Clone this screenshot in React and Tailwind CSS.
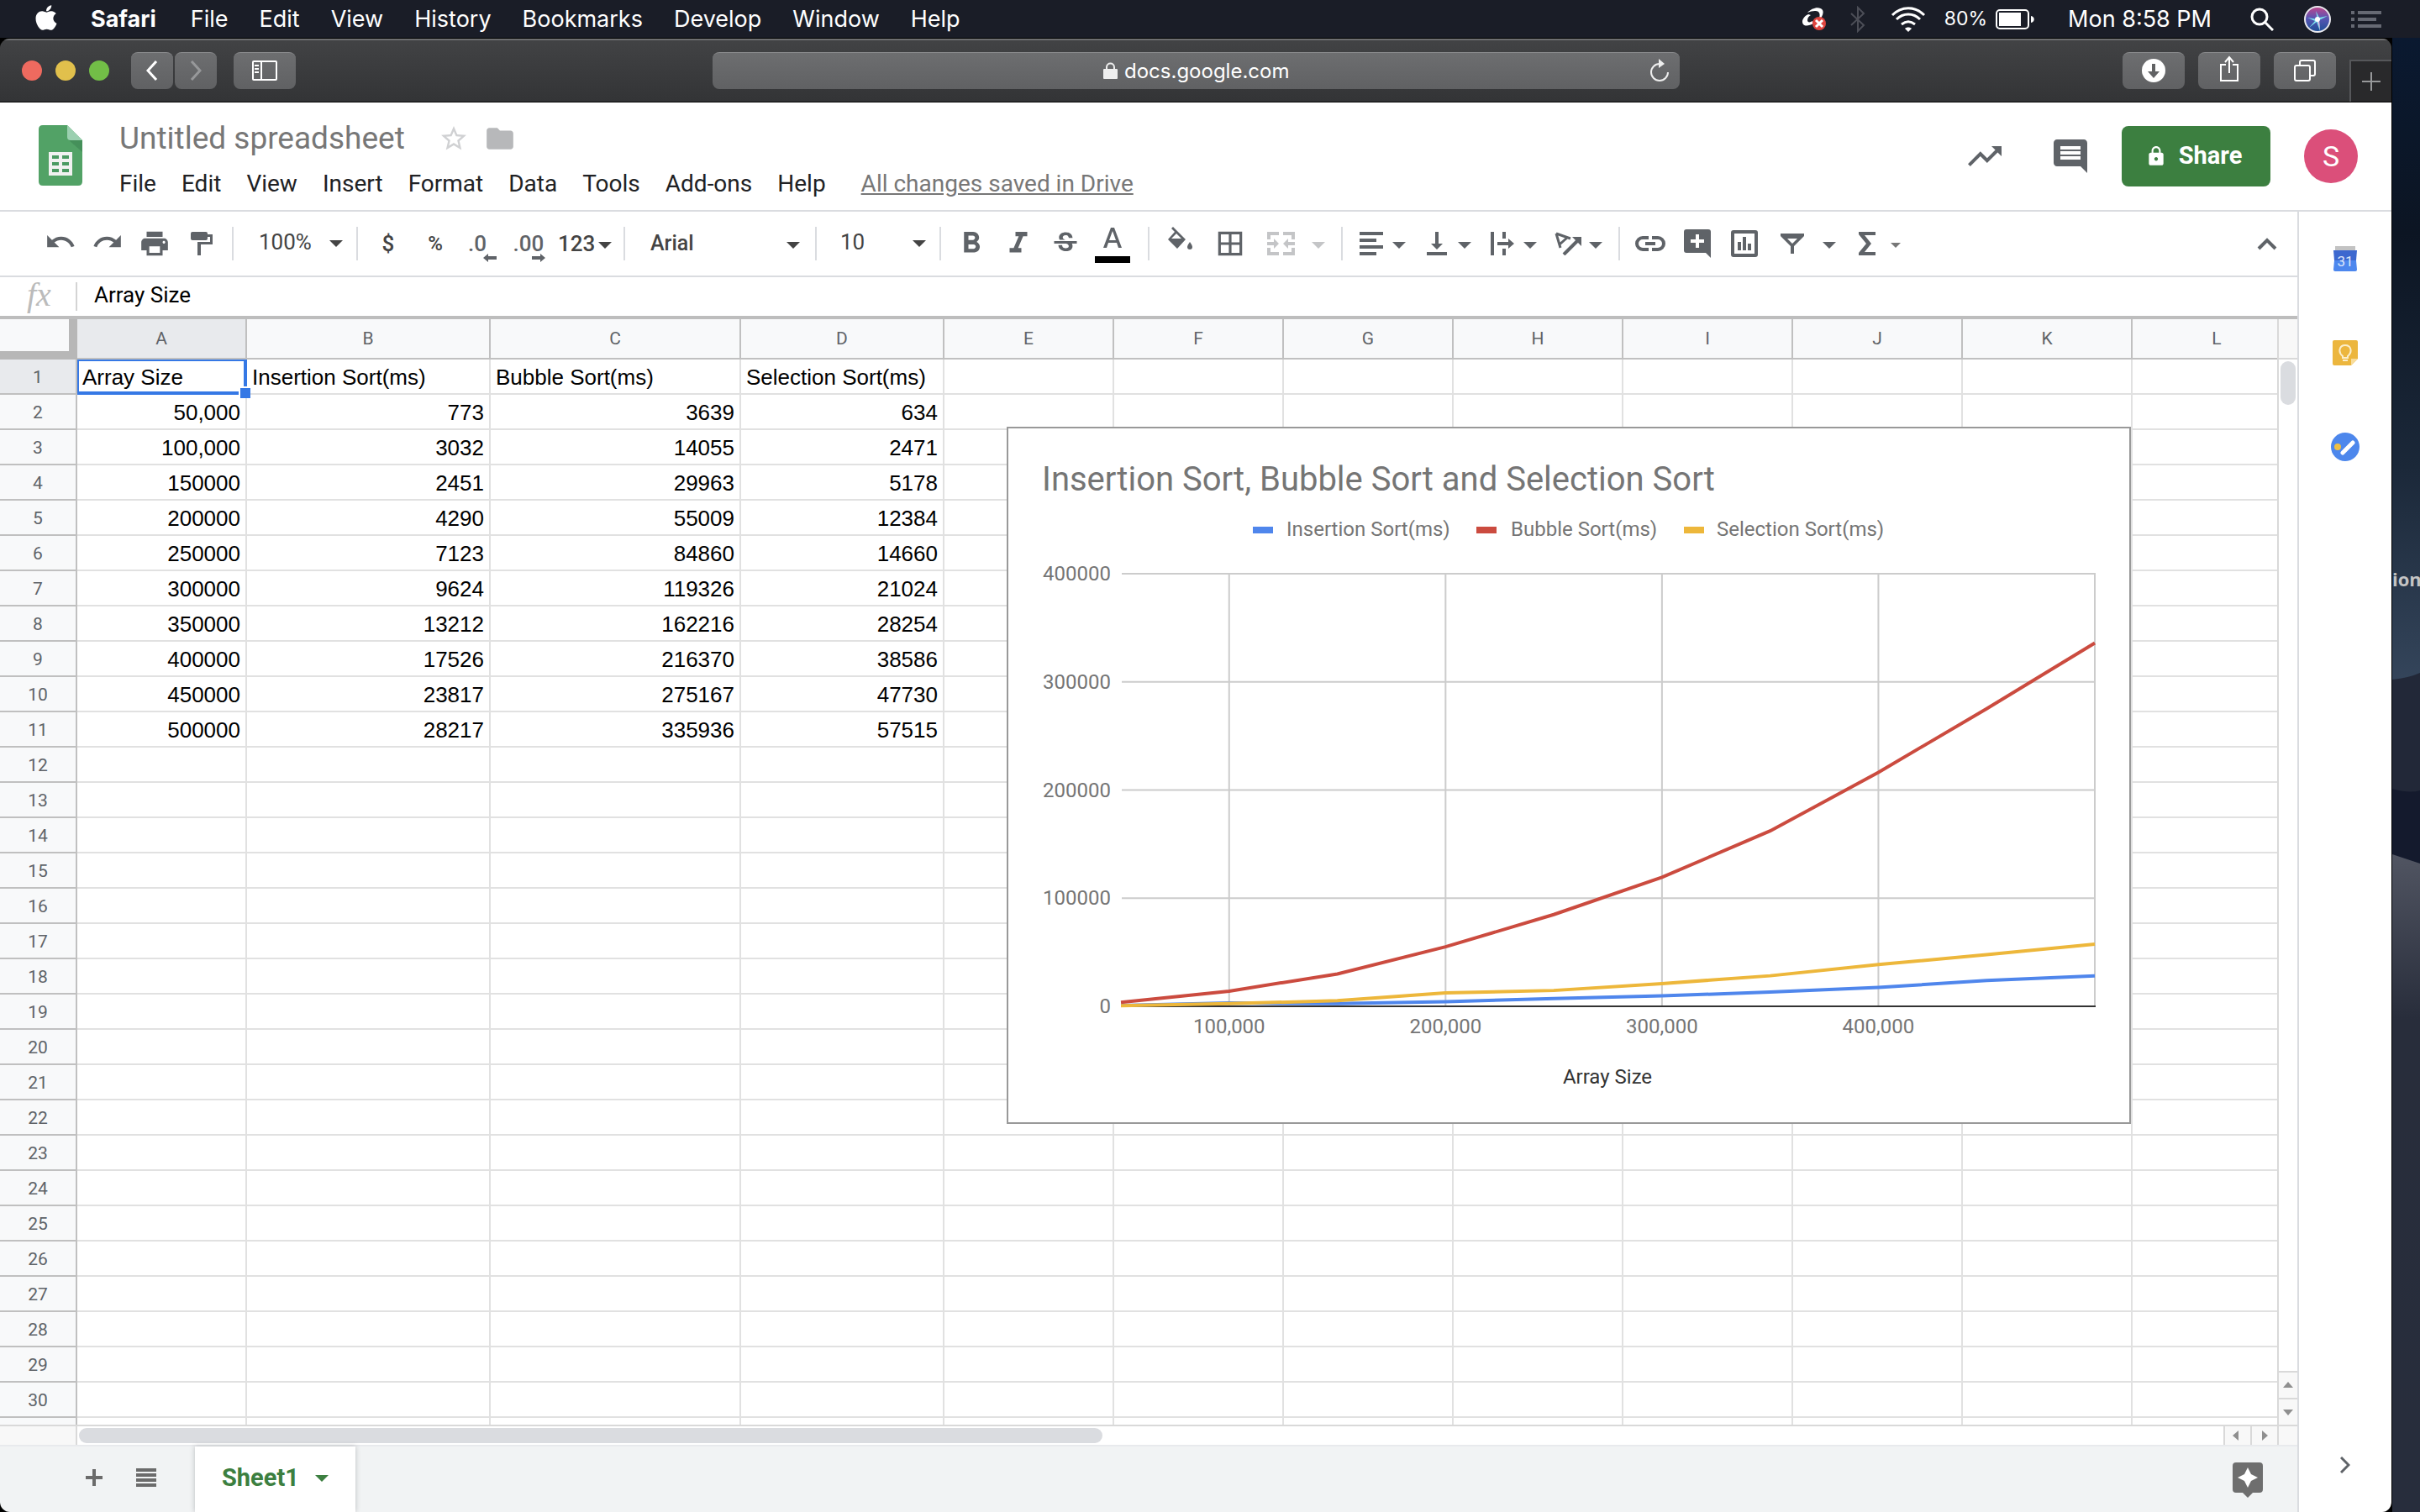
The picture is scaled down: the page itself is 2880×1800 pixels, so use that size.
import React from "react";
import { FaApple } from "react-icons/fa";
import {
  MdUndo, MdRedo, MdPrint, MdFormatBold, MdFormatItalic, MdStrikethroughS,
  MdBorderAll, MdTrendingUp, MdComment, MdLock, MdStarBorder, MdFolder,
} from "react-icons/md";

const macMenus = ["File", "Edit", "View", "History", "Bookmarks", "Develop", "Window", "Help"];
const docMenus = ["File", "Edit", "View", "Insert", "Format", "Data", "Tools", "Add-ons", "Help"];

const columns = [
  ["A", "w-[202px]"], ["B", "w-[290px]"], ["C", "w-[298px]"], ["D", "w-[242px]"],
  ["E", "w-[202px]"], ["F", "w-[202px]"], ["G", "w-[202px]"], ["H", "w-[202px]"],
  ["I", "w-[202px]"], ["J", "w-[202px]"], ["K", "w-[202px]"], ["L", "w-[202px]"],
];

const data = [
  ["Array Size", "Insertion Sort(ms)", "Bubble Sort(ms)", "Selection Sort(ms)"],
  ["50,000", "773", "3639", "634"],
  ["100,000", "3032", "14055", "2471"],
  ["150000", "2451", "29963", "5178"],
  ["200000", "4290", "55009", "12384"],
  ["250000", "7123", "84860", "14660"],
  ["300000", "9624", "119326", "21024"],
  ["350000", "13212", "162216", "28254"],
  ["400000", "17526", "216370", "38586"],
  ["450000", "23817", "275167", "47730"],
  ["500000", "28217", "335936", "57515"],
];

function MenuBar() {
  return (
    <header className="flex h-[45px] shrink-0 items-center bg-[#1a1d27] pl-10 pr-[46px] text-[27px] leading-none text-white">
      <FaApple className="mb-1 h-[34px] w-[30px]" aria-hidden="true" />
      <nav className="ml-[38px] flex items-center gap-[37px]" aria-label="System menu">
        <button className="mr-1 font-bold">Safari</button>
        {macMenus.map((m) => <button key={m}>{m}</button>)}
      </nav>
      <div className="ml-auto flex items-center">
        <svg viewBox="0 0 30 30" className="h-[30px] w-[30px]" aria-hidden="true">
          <path d="M7 7C12 1 22-1 25 4c2 4-1 9-5 13 1-4 3-8 0-11-3-2-8-1-13 1z" fill="#fff" />
          <path d="M8 9C3 11-1 17 2 21c3 3 8 1 12-1l-1-3c-3 2-6 2-6-1s2-5 4-6z" fill="#fff" />
          <circle cx="21" cy="20" r="8" fill="#e0453f" />
          <path d="M17 16l8 8M25 16l-8 8" stroke="#fff" strokeWidth="3" />
        </svg>
        <svg viewBox="0 0 18 32" className="ml-7 h-8 w-[18px]" fill="none" stroke="#4c4e57" strokeWidth="2" aria-hidden="true">
          <path d="M1 9l15 14-7 7V2l7 7L1 23" />
        </svg>
        <svg viewBox="0 0 42 30" className="ml-[30px] h-[30px] w-[42px]" fill="none" stroke="#fff" strokeWidth="3" aria-hidden="true">
          <path d="M2 10C13-1 29-1 40 10M7 15c8-8 20-8 28 0M13 21c5-4 11-4 16 0" />
          <path d="M17 26c2-2 6-2 8 0l-4 4z" fill="#fff" stroke="none" />
        </svg>
        <span className="ml-[22px] text-[23px]">80%</span>
        <svg viewBox="0 0 46 24" className="ml-[10px] h-6 w-[46px]" aria-hidden="true">
          <rect x="1" y="1" width="38" height="22" rx="4" fill="none" stroke="#fff" strokeWidth="2" />
          <rect x="4" y="4" width="26" height="16" fill="#fff" />
          <path d="M42 8c5 1 5 7 0 8z" fill="#fff" />
        </svg>
        <span className="ml-10">Mon 8:58 PM</span>
        <svg viewBox="0 0 28 28" className="ml-[46px] h-7 w-7" fill="none" stroke="#fff" strokeWidth="3" aria-hidden="true">
          <circle cx="11" cy="11" r="9" /><path d="M17 17l10 10" />
        </svg>
        <svg viewBox="0 0 32 32" className="ml-9 h-8 w-8" aria-hidden="true">
          <defs>
            <linearGradient id="siri" x1="0" y1="0" x2="0" y2="1">
              <stop offset="0" stopColor="#c2458a" /><stop offset=".45" stopColor="#5a55b4" /><stop offset="1" stopColor="#1c4f96" />
            </linearGradient>
          </defs>
          <circle cx="16" cy="16" r="15" fill="url(#siri)" stroke="#e8e8ee" strokeWidth="2" />
          <path d="M16 16L4 14l9 4-7 8 9-7 4 11-1-13 10-5-10 2-4-8z" fill="#7fe3ee" />
          <path d="M16 16l3 13-1-12z" fill="#f3a5d8" />
          <circle cx="16" cy="16" r="3" fill="#fff" />
        </svg>
        <svg viewBox="0 0 36 20" className="ml-6 h-5 w-9" fill="#666973" aria-hidden="true">
          <path d="M0 0h4v4H0zM8 0h28v4H8zM0 8h4v4H0zM8 8h22v4H8zM0 16h4v4H0zM8 16h28v4H8z" />
        </svg>
      </div>
    </header>
  );
}

const macBtn = "flex h-11 items-center justify-center rounded-lg border-t border-[#88898b] bg-linear-to-b from-[#6d6e70] to-[#606163]";

function SafariBar() {
  return (
    <div className="flex h-[76px] shrink-0 items-center border-b border-black bg-linear-to-b from-[#424345] to-[#333436] pl-[26px] shadow-[inset_0_2px_0_#6d6e70]">
      <div className="flex gap-4">
        <button aria-label="Close" className="h-6 w-6 rounded-full bg-[#ee6a5f]" />
        <button aria-label="Minimize" className="h-6 w-6 rounded-full bg-[#e1c04c]" />
        <button aria-label="Zoom" className="h-6 w-6 rounded-full bg-[#72be47]" />
      </div>
      <button aria-label="Back" className={`${macBtn} ml-[26px] w-[50px]`}>
        <svg viewBox="0 0 14 24" className="h-6 w-3.5" fill="none" stroke="#fff" strokeWidth="3"><path d="M12 1L2 12l10 11" /></svg>
      </button>
      <button aria-label="Forward" className={`${macBtn} ml-0.5 w-[50px]`}>
        <svg viewBox="0 0 14 24" className="h-6 w-3.5" fill="none" stroke="#97989a" strokeWidth="3"><path d="M2 1l10 11L2 23" /></svg>
      </button>
      <button aria-label="Sidebar" className={`${macBtn} ml-5 w-[74px]`}>
        <svg viewBox="0 0 30 24" className="h-6 w-[30px]" fill="none" stroke="#fff" strokeWidth="2">
          <rect x="1" y="1" width="28" height="22" rx="1" /><path d="M11 1v22M3 6h5M3 10h5M3 14h5" />
        </svg>
      </button>
      <div className={`${macBtn} ml-[496px] mr-[527px] min-w-0 flex-1 pl-3`}>
        <div className="flex flex-1 items-center justify-center gap-2 pl-7">
          <svg viewBox="0 0 17 20" className="h-5 w-[17px] shrink-0" aria-hidden="true">
            <rect y="8" width="17" height="12" rx="1" fill="#eee" />
            <path d="M4 9V6c0-6 9-6 9 0v3" fill="none" stroke="#eee" strokeWidth="2" />
          </svg>
          <input aria-label="Address" defaultValue="docs.google.com" className="mt-0.5 w-[200px] bg-transparent text-[24px] leading-8 text-white" />
        </div>
        <button aria-label="Reload" className="pr-3">
          <svg viewBox="0 0 24 28" className="h-7 w-6" fill="none" stroke="#eee" strokeWidth="2">
            <path d="M12 6a10 10 0 1 0 10 10" /><path d="M11 0v11l7-5z" fill="#eee" stroke="none" />
          </svg>
        </button>
      </div>
      <div className="flex gap-4">
        <button aria-label="Downloads" className={`${macBtn} w-[74px]`}>
          <svg viewBox="0 0 28 28" className="h-7 w-7"><circle cx="14" cy="14" r="14" fill="#fff" /><path d="M12 6h4v9h5l-7 8-7-8h5z" fill="#616264" /></svg>
        </button>
        <button aria-label="Share page" className={`${macBtn} w-[74px]`}>
          <svg viewBox="0 0 24 32" className="mb-1 h-8 w-6" fill="none" stroke="#fff" strokeWidth="2"><path d="M8 11H2v19h20V11h-6M12 21V2M7 8l5-6 5 6" /></svg>
        </button>
        <button aria-label="Tabs" className={`${macBtn} w-[74px]`}>
          <svg viewBox="0 0 26 26" className="h-[26px] w-[26px]" fill="none" stroke="#fff" strokeWidth="2"><rect x="1" y="7" width="18" height="18" rx="2" /><path d="M7 7V3q0-2 2-2h14q2 0 2 2v14q0 2-2 2h-3" /></svg>
        </button>
      </div>
      <button aria-label="New tab" className="ml-4 flex h-[50px] w-[50px] shrink-0 items-center justify-center self-end border-l-2 border-t-2 border-[#56575a] bg-[#29292b]">
        <svg viewBox="0 0 22 22" className="h-[22px] w-[22px]" stroke="#97989a" strokeWidth="2"><path d="M11 0v22M0 11h22" /></svg>
      </button>
    </div>
  );
}

function DocHeader() {
  return (
    <div className="flex h-[130px] shrink-0 items-center border-b-2 border-[#dadce0] bg-white pl-[46px] pr-10">
      <svg viewBox="0 0 52 72" className="mb-0.5 h-[72px] w-[52px] shrink-0" aria-hidden="true">
        <path d="M5 0h29l18 18v49q0 5-5 5H5q-5 0-5-5V5q0-5 5-5z" fill="#52a266" />
        <path d="M36 18h16v14z" fill="#45905a" />
        <path d="M34 0l18 18H38q-4 0-4-4z" fill="#9bd0b0" />
        <path d="M12 32h28v28H12z" fill="#f1f1f1" />
        <path d="M16 36h8v4h-8zM28 36h8v4h-8zM16 44h8v4h-8zM28 44h8v4h-8zM16 52h8v4h-8zM28 52h8v4h-8z" fill="#4a9a62" />
      </svg>
      <div className="ml-11 flex flex-col pt-1.5">
        <div className="flex items-center">
          <h1 className="text-[37px] leading-[44px] text-[#777]">Untitled spreadsheet</h1>
          <button aria-label="Star" className="ml-10"><MdStarBorder className="h-9 w-9 text-[#d0d1d3]" /></button>
          <button aria-label="Move to folder" className="ml-[18px]"><MdFolder className="h-[38px] w-[38px] text-[#b7b8ba]" /></button>
        </div>
        <nav className="mt-4 flex items-center gap-[30px] text-[28px] leading-8 text-[#202124]" aria-label="Document menu">
          {docMenus.map((m) => <button key={m}>{m}</button>)}
          <a href="#history" className="ml-3 text-[#777] underline">All changes saved in Drive</a>
        </nav>
      </div>
      <div className="ml-auto flex items-center">
        <button aria-label="Activity"><MdTrendingUp className="h-12 w-12 text-[#5f6368]" /></button>
        <button aria-label="Comments" className="ml-[54px]"><MdComment className="h-12 w-12 text-[#5f6368]" /></button>
        <button className="ml-[37px] flex h-[72px] w-[177px] items-center justify-center gap-3.5 rounded-lg bg-[#3c7f40] pr-1.5 text-[29px] font-bold text-white">
          <MdLock className="h-[26px] w-[26px]" aria-hidden="true" />Share
        </button>
        <button aria-label="Account" className="ml-10 h-16 w-16 rounded-full bg-[#db4f7a] text-[34px] leading-[64px] text-white">S</button>
      </div>
    </div>
  );
}

function Caret({ small, className = "" }) {
  return (
    <svg viewBox="0 0 16 8" className={`${small ? "h-1.5 w-3" : "h-2 w-4"} shrink-0 ${className}`} fill="currentColor" aria-hidden="true">
      <path d="M0 0h16L8 8z" />
    </svg>
  );
}
const Sep = ({ className = "mx-2" }) => <div className={`${className} h-10 w-0.5 shrink-0 bg-[#dadce0]`} />;
function Tool({ label, children, className = "w-14" }) {
  return <button aria-label={label} className={`${className} flex h-14 shrink-0 items-center justify-center`}>{children}</button>;
}
function DropTool({ label, children, small, className = "w-[78px]" }) {
  return (
    <button aria-label={label} className={`${className} flex h-14 shrink-0 items-center gap-[7px] pl-2`}>
      <span className="flex w-9 justify-center">{children}</span>
      <Caret small={small} className="mt-1" />
    </button>
  );
}

function Toolbar() {
  return (
    <div role="toolbar" aria-label="Formatting" className="flex h-[78px] shrink-0 items-center border-b-2 border-[#dadce0] bg-white pl-11 text-[26px] font-medium text-[#5f6368]">
      <Tool label="Undo"><MdUndo className="mb-1 h-[38px] w-[38px]" /></Tool>
      <Tool label="Redo"><MdRedo className="mb-1 h-[38px] w-[38px]" /></Tool>
      <Tool label="Print"><MdPrint className="h-[38px] w-[38px]" /></Tool>
      <Tool label="Paint format">
        <svg viewBox="0 0 26 28" className="h-7 w-[26px]" fill="currentColor">
          <path d="M2 0h16q2 0 2 2v1h6v12H12v13H8V12h15V6h-3v2q0 2-2 2H2q-2 0-2-2V2q0-2 2-2z" />
        </svg>
      </Tool>
      <Sep />
      <button aria-label="Zoom level" className="flex w-[130px] items-center justify-between pb-1 pl-[22px] pr-2 font-normal text-[#444]">100%<Caret className="mt-1" /></button>
      <Sep />
      <Tool label="Currency"><span className="text-[#444]">$</span></Tool>
      <Tool label="Percent"><span className="text-[24px] text-[#444]">%</span></Tool>
      <Tool label="Decrease decimals">
        <span className="flex flex-col items-end">
          <span className="mr-3 mt-2.5 leading-6">.0</span>
          <svg viewBox="0 0 16 10" className="h-2.5 w-4" fill="currentColor"><path d="M0 5l6-5v3h10v4H6v3z" /></svg>
        </span>
      </Tool>
      <Tool label="Increase decimals">
        <span className="flex flex-col items-end">
          <span className="mr-0.5 mt-2.5 leading-6">.00</span>
          <svg viewBox="0 0 16 10" className="h-2.5 w-4" fill="currentColor"><path d="M16 5l-6-5v3H0v4h10v3z" /></svg>
        </span>
      </Tool>
      <button aria-label="More formats" className="flex w-[78px] items-center gap-1 pl-1.5 text-[#444]">123<Caret className="mt-1" /></button>
      <Sep className="ml-1.5 mr-2" />
      <button aria-label="Font" className="flex w-[210px] items-center justify-between pl-[22px] pr-2.5 text-[25px] text-[#444]">Arial<Caret className="mt-1" /></button>
      <Sep />
      <button aria-label="Font size" className="flex w-[130px] items-center justify-between pb-1 pl-5 pr-2 font-normal text-[#444]">10<Caret className="mt-1" /></button>
      <Sep />
      <Tool label="Bold"><MdFormatBold className="h-[42px] w-[42px]" /></Tool>
      <Tool label="Italic"><MdFormatItalic className="h-[42px] w-[42px]" /></Tool>
      <Tool label="Strikethrough"><MdStrikethroughS className="h-9 w-9" /></Tool>
      <Tool label="Text color">
        <span className="flex flex-col items-center pt-1">
          <svg viewBox="0 0 22 24" className="h-6 w-[22px]" fill="currentColor"><path d="M9 0h4l9 24h-4l-2-6H6l-2 6H0zM7 15h8L11 4z" /></svg>
          <span className="mt-2.5 h-2 w-[42px] bg-black" />
        </span>
      </Tool>
      <Sep className="ml-3.5 mr-1.5" />
      <Tool label="Fill color" className="w-[60px]">
        <svg viewBox="0 0 30 28" className="mb-3 h-7 w-[30px]" fill="currentColor">
          <path fillRule="evenodd" d="M5 2l2-2 15 15-10 11L1 15 9 6zM11 8l-6 6h12z" />
          <path d="M27 18q3 4 3 6a3 3 0 0 1-6 0q0-2 3-6z" />
        </svg>
      </Tool>
      <Tool label="Borders" className="w-[60px]"><MdBorderAll className="h-[38px] w-[38px]" /></Tool>
      <button aria-label="Merge cells" className="flex h-14 w-[94px] shrink-0 items-center gap-5 pl-3.5 text-[#c4c5c7]">
        <svg viewBox="0 0 33 28" className="h-7 w-[33px]" fill="currentColor">
          <path d="M0 0h14v4H4v5H0zM19 0h14v9h-4V4H19zM0 19h4v5h10v4H0zM29 19h4v9H19v-4h10zM0 12h8V8l6 6-6 6v-4H0zM33 12h-8V8l-6 6 6 6v-4h8z" />
        </svg>
        <Caret className="mt-1" />
      </button>
      <Sep />
      <DropTool label="Horizontal align">
        <svg viewBox="0 0 28 28" className="h-7 w-7" fill="currentColor"><path d="M0 0h28v4H0zM0 8h20v4H0zM0 16h28v4H0zM0 24h20v4H0z" /></svg>
      </DropTool>
      <DropTool label="Vertical align">
        <svg viewBox="0 0 24 28" className="h-7 w-6" fill="currentColor"><path d="M0 24h24v4H0zM10 0h4v14h5l-7 7-7-7h5z" /></svg>
      </DropTool>
      <DropTool label="Text wrapping">
        <svg viewBox="0 0 28 28" className="h-7 w-7" fill="currentColor"><path d="M0 0h4v28H0zM14 0h4v8h-4zM14 20h4v8h-4zM8 12h13V8l7 6-7 6v-4H8z" /></svg>
      </DropTool>
      <DropTool label="Text rotation">
        <svg viewBox="0 0 32 28" className="h-7 w-8" fill="none" stroke="currentColor" strokeWidth="3">
          <path d="M2 2l17 6M2 2l5 17M6 15l9-8" /><path d="M11 27l16-16" strokeWidth="4" /><path d="M21 6h11v11z" fill="currentColor" stroke="none" />
        </svg>
      </DropTool>
      <Sep />
      <Tool label="Insert link">
        <svg viewBox="0 0 36 18" className="h-[18px] w-9" fill="none" stroke="currentColor" strokeWidth="4"><path d="M16 2H9a7 7 0 0 0 0 14h7M20 2h7a7 7 0 0 1 0 14h-7M12 9h12" /></svg>
      </Tool>
      <Tool label="Insert comment">
        <svg viewBox="0 0 32 34" className="h-[34px] w-8" fill="currentColor"><path fillRule="evenodd" d="M3 0h26q3 0 3 3v31l-6-6H3q-3 0-3-3V3q0-3 3-3zM14 6v6H8v4h6v6h4v-6h6v-4h-6V6z" /></svg>
      </Tool>
      <Tool label="Insert chart">
        <svg viewBox="0 0 32 32" className="h-8 w-8" fill="currentColor"><path fillRule="evenodd" d="M3 0h26q3 0 3 3v26q0 3-3 3H3q-3 0-3-3V3q0-3 3-3zM4 4v24h24V4zM8 14h4v10H8zM14 8h4v16h-4zM20 16h4v8h-4z" /></svg>
      </Tool>
      <button aria-label="Filter" className="flex h-14 w-[92px] shrink-0 items-center gap-[22px] pl-[15px]">
        <svg viewBox="0 0 28 24" className="h-6 w-7" fill="currentColor"><path fillRule="evenodd" d="M0 0h28v3L16 15v9h-4v-9L0 3zM8 6l6 6 6-6z" /></svg>
        <Caret className="mt-1" />
      </button>
      <button aria-label="Functions" className="flex h-14 shrink-0 items-center gap-[18px] pl-4">
        <svg viewBox="0 0 20 28" className="h-7 w-5" fill="currentColor"><path d="M0 0h20v4H7l8 10-8 10h13v4H0v-3l9-11L0 3z" /></svg>
        <Caret small className="mt-1 text-[#777]" />
      </button>
      <button aria-label="Hide the menus" className="ml-auto flex w-[72px] justify-center">
        <svg viewBox="0 0 24 15" className="h-[15px] w-6" fill="none" stroke="currentColor" strokeWidth="4"><path d="M2 13L12 3l10 10" /></svg>
      </button>
    </div>
  );
}

function FormulaBar() {
  return (
    <div className="flex h-[50px] shrink-0 items-center border-b-4 border-[#bdbdbd] bg-white">
      <label htmlFor="formula" className="w-[90px] pb-1 pl-8 font-['Liberation_Serif',serif] text-[40px] italic leading-[40px] text-[#bbb]">fx</label>
      <div className="h-[34px] w-0.5 bg-[#d4d4d4]" />
      <input id="formula" defaultValue="Array Size" className="mb-1 min-w-0 flex-1 bg-transparent pl-5 text-[26px] leading-8 text-black" />
    </div>
  );
}

const series = [
  { name: "Insertion Sort(ms)", color: "#4f86ec", col: 1, lx: 291, tx: 331 },
  { name: "Bubble Sort(ms)", color: "#cb4b3f", col: 2, lx: 557, tx: 598 },
  { name: "Selection Sort(ms)", color: "#edb73b", col: 3, lx: 804, tx: 843 },
];
const num = (s) => Number(s.replace(",", ""));
const px = (v) => 134 + ((v - 50000) / 450000) * 1159;
const py = (v) => 688 - (v / 400000) * 515;

function Chart() {
  return (
    <figure className="absolute left-[1198px] top-32 w-[1338px] border-2 border-[#999] bg-white">
      <svg viewBox="0 0 1334 826" className="block w-full" fontSize="24" fill="#757575" role="img" aria-label="Insertion Sort, Bubble Sort and Selection Sort">
        <text x="40" y="74" fontSize="40">Insertion Sort, Bubble Sort and Selection Sort</text>
        {series.map((s) => (
          <g key={s.name}>
            <rect x={s.lx} y="117" width="24" height="8" fill={s.color} />
            <text x={s.tx} y="128">{s.name}</text>
          </g>
        ))}
        {[100000, 200000, 300000, 400000].map((v) => (
          <g key={v}>
            <path d={`M135 ${py(v)}H1294`} stroke="#ccc" strokeWidth="2" />
            <path d={`M${px(v)} 173V688`} stroke="#ccc" strokeWidth="2" />
            <text x="122" y={py(v) + 8} textAnchor="end">{v}</text>
            <text x={px(v)} y="720" textAnchor="middle">{v.toLocaleString("en-US")}</text>
          </g>
        ))}
        <path d="M1293 173V688" stroke="#ccc" strokeWidth="2" />
        <text x="122" y="696" textAnchor="end">0</text>
        <path d="M135 688H1294" stroke="#333" strokeWidth="2" />
        {series.map((s) => (
          <polyline key={s.name} fill="none" stroke={s.color} strokeWidth="4"
            points={data.slice(1).map((r) => `${px(num(r[0]))},${py(num(r[s.col]))}`).join(" ")} />
        ))}
        <text x="713" y="780" textAnchor="middle" fill="#333">Array Size</text>
      </svg>
    </figure>
  );
}

function Grid() {
  return (
    <div className="relative min-w-0 flex-1 overflow-hidden bg-white">
      <table className="w-[2740px] table-fixed border-separate border-spacing-0">
        <colgroup>
          <col className="w-[92px]" />
          {columns.map(([n, w]) => <col key={n} className={w} />)}
        </colgroup>
        <thead>
          <tr className="h-12 text-[21px] text-[#5f6368]">
            <td className="border-b-10 border-r-10 border-[#b7b7b7] bg-[#f8f9fa]" />
            {columns.map(([n]) => (
              <th key={n} scope="col" className={`border-b-2 border-r-2 border-[#c0c0c0] p-0 pt-0.5 font-normal ${n === "A" ? "bg-[#e8eaed]" : "bg-[#f8f9fa]"}`}>{n}</th>
            ))}
          </tr>
        </thead>
        <tbody>
          {Array.from({ length: 31 }, (_, r) => (
            <tr key={r} className="h-[42px]">
              <th scope="row" className={`border-b-2 border-r-2 border-[#c0c0c0] p-0 pt-0.5 text-[21px] leading-[38px] font-normal text-[#5f6368] ${r === 0 ? "bg-[#e8eaed]" : "bg-[#f8f9fa]"}`}>{r < 30 ? r + 1 : ""}</th>
              {columns.map(([n], c) => (
                <td key={n} className={`relative border-b-2 border-r-2 border-[#e1e1e1] px-1.5 pt-0.5 pb-0 font-['Liberation_Sans',Arial,sans-serif] text-[26px] leading-[38px] whitespace-nowrap text-black ${r === 0 ? "text-left" : "text-right"}`}>
                  {data[r]?.[c]}
                  {r === 0 && c === 0 && (
                    <>
                      <div className="absolute -bottom-0.5 -right-0.5 left-0 top-0 border-b-4 border-l-2 border-r-4 border-t-2 border-[#3578e5]" />
                      <div className="absolute -bottom-1.5 -right-1.5 z-10 h-3.5 w-3.5 border-l-2 border-t-2 border-white bg-[#3578e5]" />
                    </>
                  )}
                </td>
              ))}
            </tr>
          ))}
        </tbody>
      </table>
      <Chart />
    </div>
  );
}

function Arrow({ d }) {
  return <svg viewBox="0 0 12 12" className="h-3 w-3" fill="#8f8f8f" aria-hidden="true"><path d={d} /></svg>;
}
const scrollBtn = "flex items-center justify-center border-[#d9d9d9] bg-[#f8f8f8]";

function Sheet() {
  return (
    <>
      <div className="flex min-h-0 flex-1 overflow-hidden">
        <Grid />
        <div className="flex w-6 shrink-0 flex-col border-l-2 border-[#d9d9d9] bg-white">
          <div className="h-12 border-b-2 border-[#d9d9d9] bg-[#f8f8f8]" />
          <div className="mx-0.5 mt-0.5 h-[52px] rounded-full bg-[#dadce0]" />
          <button aria-label="Scroll up" className={`${scrollBtn} mt-auto h-8 border-t-2`}><Arrow d="M0 9l6-7 6 7z" /></button>
          <button aria-label="Scroll down" className={`${scrollBtn} h-8 border-t-2`}><Arrow d="M0 3l6 7 6-7z" /></button>
        </div>
      </div>
      <div className="flex h-6 shrink-0 border-t-2 border-[#d9d9d9] bg-white">
        <div className="w-[92px] border-r-2 border-[#d9d9d9] bg-[#f8f8f8]" />
        <div className="ml-0.5 mt-0.5 h-[18px] w-[1218px] rounded-full bg-[#dadce0]" />
        <button aria-label="Scroll left" className={`${scrollBtn} ml-auto w-8 border-l-2 pr-1`}><Arrow d="M9 0L2 6l7 6z" /></button>
        <button aria-label="Scroll right" className={`${scrollBtn} w-8 border-l-2`}><Arrow d="M3 0l7 6-7 6z" /></button>
        <div className="w-6 border-l-2 border-[#d9d9d9] bg-[#f8f8f8]" />
      </div>
    </>
  );
}

function SheetTabs() {
  return (
    <div className="flex h-20 shrink-0 items-stretch border-t-2 border-[#e8eaed] bg-[#f1f3f4] pr-[41px]">
      <button aria-label="Add sheet" className="ml-[84px] flex w-14 items-center justify-center pb-1">
        <svg viewBox="0 0 20 20" className="h-5 w-5" stroke="#6b6b6b" strokeWidth="4"><path d="M10 0v20M0 10h20" /></svg>
      </button>
      <button aria-label="All sheets" className="ml-1.5 flex w-14 items-center justify-center pb-1">
        <svg viewBox="0 0 24 22" className="h-[22px] w-6" fill="#6b6b6b"><path d="M0 0h24v4H0zM0 6h24v4H0zM0 12h24v4H0zM0 18h24v4H0z" /></svg>
      </button>
      <button className="ml-[30px] flex w-[191px] items-center gap-[19px] bg-white pb-0.5 pl-8 text-[29px] font-bold text-[#3c7f40] shadow-[0_0_6px_rgba(60,64,67,0.3)]">
        Sheet1<Caret />
      </button>
      <button aria-label="Explore" className="ml-auto">
        <svg viewBox="0 0 36 42" className="mt-0.5 h-[42px] w-9"><path d="M4 0h28q4 0 4 4v28q0 4-4 4h-8l-6 6-6-6H4q-4 0-4-4V4q0-4 4-4z" fill="#6e6e6e" /><path d="M18 6l4 8 8 4-8 4-4 8-4-8-8-4 8-4z" fill="#fff" /></svg>
      </button>
    </div>
  );
}

function SidePanel() {
  return (
    <aside className="flex w-28 shrink-0 flex-col items-center border-l-2 border-[#dadce0] bg-white">
      <button aria-label="Calendar" className="mt-[41px]">
        <svg viewBox="0 0 28 30" className="h-[30px] w-7">
          <path d="M2 0h24v6H2z" fill="#c3c3c3" /><path d="M0 5h28l-1 12H1z" fill="#3d68cf" /><path d="M1 17h26l1 11q0 2-2 2H2q-2 0-2-2z" fill="#4d87ee" />
          <text x="14" y="24" fontSize="17" textAnchor="middle" fill="#dfe7fa">31</text>
        </svg>
      </button>
      <button aria-label="Keep" className="mt-[82px]">
        <svg viewBox="0 0 30 30" className="h-[30px] w-[30px]">
          <path d="M2 0h26q2 0 2 2v20l-8 8H2q-2 0-2-2V2q0-2 2-2z" fill="#ecb63e" /><path d="M22 22h8l-8 8z" fill="#f7dc9b" />
          <path d="M12 19c-6-5-4-13 3-13s9 8 3 13v2h-6zM12 24h6" fill="none" stroke="#fbeecb" strokeWidth="2" />
        </svg>
      </button>
      <button aria-label="Tasks" className="mt-20">
        <svg viewBox="0 0 34 34" className="h-[34px] w-[34px]">
          <circle cx="17" cy="17" r="17" fill="#4d87ec" /><circle cx="8" cy="17" r="4" fill="#efbf43" /><path d="M14 24L26 12" stroke="#fff" strokeWidth="5" strokeLinecap="round" />
        </svg>
      </button>
      <button aria-label="Show side panel" className="mb-[46px] mt-auto">
        <svg viewBox="0 0 12 20" className="h-5 w-3" fill="none" stroke="#5f6368" strokeWidth="3"><path d="M1 1l9 9-9 9" /></svg>
      </button>
    </aside>
  );
}

function Desktop() {
  return (
    <div className="relative w-[33px] shrink-0 overflow-hidden bg-[#0b1b33]">
      <svg viewBox="0 0 33 1755" preserveAspectRatio="none" className="h-full w-full" aria-hidden="true">
        <defs>
          <linearGradient id="sky" x1="0" y1="0" x2="0" y2="1"><stop offset="0" stopColor="#0a1930" /><stop offset=".3" stopColor="#0c1523" /><stop offset=".66" stopColor="#1b2839" /><stop offset="1" stopColor="#35465c" /></linearGradient>
          <linearGradient id="dune" x1="0" y1="0" x2="0" y2="1"><stop offset="0" stopColor="#515562" /><stop offset=".25" stopColor="#282d3b" /><stop offset="1" stopColor="#272d3c" /></linearGradient>
        </defs>
        <rect width="33" height="775" fill="url(#sky)" />
        <path d="M0 764q20-2 33-8v150H0z" fill="#222838" />
        <path d="M0 894q20 6 33 2v100H0z" fill="#141a2d" />
        <path d="M0 972l33 11v772H0z" fill="url(#dune)" />
      </svg>
      <span className="absolute left-0 top-[630px] font-['Open_Sans',sans-serif] text-[22px] leading-7 font-bold text-[#c4c4c4]">ion</span>
    </div>
  );
}

export default function App() {
  return (
    <div className="flex h-screen flex-col overflow-hidden bg-black font-['Inter',sans-serif]">
      <MenuBar />
      <div className="flex min-h-0 flex-1">
        <main className="flex min-w-0 flex-1 flex-col overflow-hidden rounded-xl border-r border-t border-black">
          <SafariBar />
          <div className="flex min-h-0 flex-1 flex-col font-['Roboto',sans-serif]">
            <DocHeader />
            <div className="flex min-h-0 flex-1">
              <div className="flex min-w-0 flex-1 flex-col">
                <Toolbar />
                <FormulaBar />
                <Sheet />
                <SheetTabs />
              </div>
              <SidePanel />
            </div>
          </div>
        </main>
        <Desktop />
      </div>
    </div>
  );
}
